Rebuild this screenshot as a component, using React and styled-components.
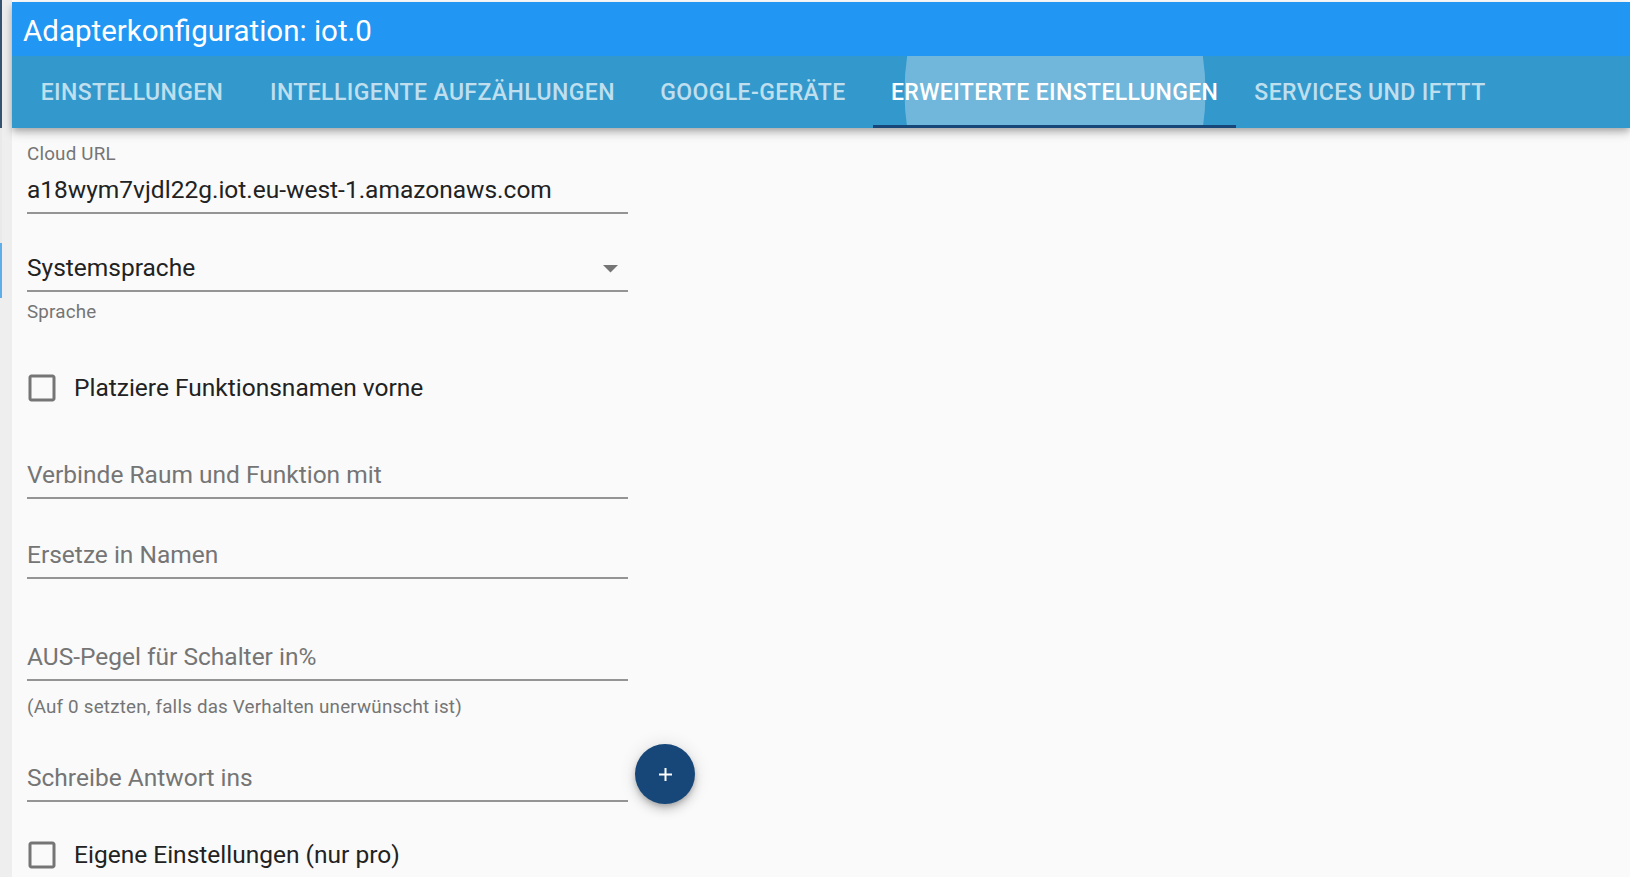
import React from "react";
import styled, { createGlobalStyle } from "styled-components";

const GlobalStyle = createGlobalStyle`
  html, body {
    margin: 0;
    padding: 0;
  }
  body {
    font-family: Roboto, "Liberation Sans", Arial, sans-serif;
    background: #fafafa;
    overflow: hidden;
  }
`;

const Page = styled.div`
  display: flex;
  height: 100vh;
  background: #eeeeee;
`;

const Edge = styled.div`
  width: 2px;
  flex-shrink: 0;
  display: flex;
  flex-direction: column;
  background: #eeeeee;
`;

const EdgeSeg = styled.div`
  height: ${(p) => p.$h}px;
  background: ${(p) => p.$c};
`;

const Gutter = styled.div`
  width: 10px;
  flex-shrink: 0;
  background: #eeeeee;
`;

const Main = styled.div`
  flex: 1;
  display: flex;
  flex-direction: column;
  background: #fafafa;
  border-top: 2px solid #fff;
  min-width: 0;
`;

const AppBar = styled.div`
  position: relative;
  z-index: 1;
  box-shadow: 0 3px 6px -1px rgba(0, 0, 0, 0.2), 0 6px 8px 0 rgba(0, 0, 0, 0.12),
    0 2px 14px 0 rgba(0, 0, 0, 0.1);
`;

const TitleBar = styled.div`
  height: 54px;
  background: #2196f3;
  display: flex;
  align-items: center;
  padding-left: 11px;
`;

const Title = styled.div`
  margin-top: 3px;
  color: #fff;
  font-size: 29.5px;
  line-height: 48px;
  font-weight: 400;
`;

const TabBar = styled.div`
  height: 72px;
  background: #3399cc;
  display: flex;
`;

const Tab = styled.div`
  position: relative;
  overflow: hidden;
  min-width: 240px;
  padding: 1px 18px 0;
  box-sizing: border-box;
  display: flex;
  justify-content: center;
  align-items: center;
  font-size: 23px;
  line-height: 70px;
  font-weight: 500;
  text-transform: uppercase;
  letter-spacing: 0.4px;
  white-space: nowrap;
  color: ${(p) => (p.$active ? "#fff" : "rgba(255,255,255,0.7)")};
`;

const TabText = styled.span`
  position: relative;
`;

const Ripple = styled.span`
  position: absolute;
  left: 50%;
  top: 50%;
  width: 301px;
  height: 382px;
  transform: translate(-50%, -50%);
  border-radius: 50%;
  background: rgba(255, 255, 255, 0.3);
`;

const Indicator = styled.span`
  position: absolute;
  left: 0;
  right: 0;
  bottom: 0;
  height: 3px;
  background: #164778;
`;

const Content = styled.div`
  flex: 1;
  padding: 17px 0 0 15px;
  display: flex;
  flex-direction: column;
  align-items: flex-start;
`;

const SmallText = styled.div`
  margin-top: ${(p) => p.$mt || 0}px;
  font-size: 18.8px;
  line-height: 18px;
  color: #757575;
  letter-spacing: 0.2px;
  white-space: nowrap;
`;

const Field = styled.div`
  margin-top: ${(p) => p.$mt || 0}px;
  width: 601px;
  height: 30px;
  padding-bottom: 7px;
  border-bottom: 2px solid #949494;
  display: flex;
  align-items: center;
  justify-content: space-between;
  font-size: 24.5px;
  line-height: 30px;
  color: ${(p) => (p.$muted ? "#757575" : "#222")};
  white-space: nowrap;
`;

const Arrow = styled.svg`
  margin-right: 10px;
  margin-top: 2px;
`;

const CheckRow = styled.div`
  margin-top: ${(p) => p.$mt || 0}px;
  height: 30px;
  display: flex;
  align-items: center;
  font-size: 24.5px;
  line-height: 30px;
  color: #222;
  white-space: nowrap;
`;

const CheckIcon = styled.svg`
  width: 36px;
  height: 36px;
  margin-left: -3px;
  margin-right: 14px;
  fill: #757575;
  flex-shrink: 0;
`;

const FieldRow = styled.div`
  margin-top: ${(p) => p.$mt || 0}px;
  display: flex;
  align-items: flex-end;
  gap: 7px;
`;

const Fab = styled.div`
  width: 60px;
  height: 60px;
  margin-top: -21px;
  margin-bottom: -2px;
  border-radius: 50%;
  background: #164778;
  display: flex;
  align-items: center;
  justify-content: center;
  box-shadow: 0 3px 5px -1px rgba(0, 0, 0, 0.2), 0 6px 10px 0 rgba(0, 0, 0, 0.14),
    0 1px 18px 0 rgba(0, 0, 0, 0.12);
`;

const tabs = [
  "Einstellungen",
  "Intelligente Aufzählungen",
  "Google-Geräte",
  "Erweiterte Einstellungen",
  "Services und IFTTT",
];

function Checkbox({ label, mt }) {
  return (
    <CheckRow $mt={mt}>
      <CheckIcon viewBox="0 0 24 24">
        <path d="M19 5v14H5V5h14m0-2H5c-1.11 0-2 .9-2 2v14c0 1.1.89 2 2 2h14c1.1 0 2-.9 2-2V5c0-1.1-.9-2-2-2z" />
      </CheckIcon>
      {label}
    </CheckRow>
  );
}

export default function App() {
  return (
    <>
      <GlobalStyle />
      <Page>
        <Edge>
          <EdgeSeg $h={128} $c="#36536f" />
          <EdgeSeg $h={115} $c="#e9e9e9" />
          <EdgeSeg $h={55} $c="#5eaeea" />
        </Edge>
        <Gutter />
        <Main>
          <AppBar>
            <TitleBar>
              <Title>Adapterkonfiguration: iot.0</Title>
            </TitleBar>
            <TabBar>
              {tabs.map((t, i) => (
                <Tab key={t} $active={i === 3}>
                  {i === 3 && <Ripple />}
                  <TabText>{t}</TabText>
                  {i === 3 && <Indicator />}
                </Tab>
              ))}
            </TabBar>
          </AppBar>
          <Content>
            <SmallText>Cloud URL</SmallText>
            <Field $mt={12}>a18wym7vjdl22g.iot.eu-west-1.amazonaws.com</Field>

            <Field $mt={39}>
              Systemsprache
              <Arrow width="15" height="8" viewBox="0 0 15 8">
                <path d="M0 0h15l-7.5 7.5z" fill="#757575" />
              </Arrow>
            </Field>
            <SmallText $mt={11}>Sprache</SmallText>

            <Checkbox mt={52} label="Platziere Funktionsnamen vorne" />

            <Field $mt={57} $muted>Verbinde Raum und Funktion mit</Field>
            <Field $mt={41} $muted>Ersetze in Namen</Field>
            <Field $mt={63} $muted>AUS-Pegel für Schalter in%</Field>
            <SmallText $mt={17}>(Auf 0 setzten, falls das Verhalten unerwünscht ist)</SmallText>

            <FieldRow $mt={47}>
              <Field $muted>Schreibe Antwort ins</Field>
              <Fab>
                <svg width="13" height="13" viewBox="0 0 13 13">
                  <path d="M6.5 0v13M0 6.5h13" stroke="#fff" strokeWidth="2" />
                </svg>
              </Fab>
            </FieldRow>

            <Checkbox mt={38} label="Eigene Einstellungen (nur pro)" />
          </Content>
        </Main>
      </Page>
    </>
  );
}
